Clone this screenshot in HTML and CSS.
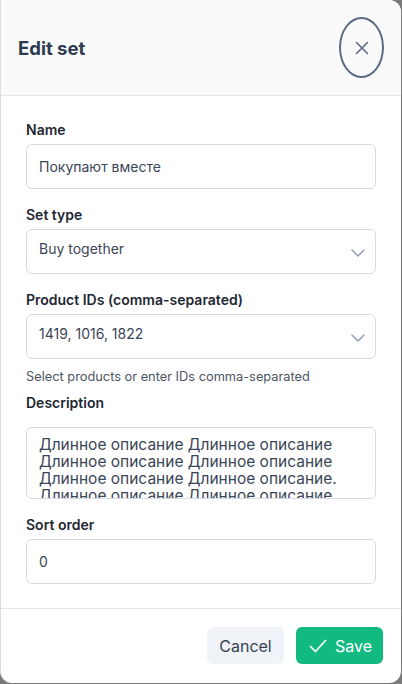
FILE: index.html
```html
<!DOCTYPE html>
<html lang="en">
<head>
<meta charset="utf-8">
<link rel="stylesheet" href="styles.css">
</head>
<body>
<div class="modal">
  <div class="modal-header">
    <h2 class="title">Edit set</h2>
    <button class="close-btn" type="button" aria-label="Close">
      <svg width="14" height="14" viewBox="0 0 14 14"><path d="M1.5 1.5 L12.5 12.5 M12.5 1.5 L1.5 12.5" stroke="#5b6b85" stroke-width="1.6" stroke-linecap="round" fill="none"/></svg>
    </button>
  </div>
  <div class="modal-body">
    <div class="field">
      <label class="label">Name</label>
      <div class="control">Покупают вместе</div>
    </div>
    <div class="field">
      <label class="label">Set type</label>
      <div class="control select"><span class="value">Buy together</span>
        <svg class="chev" width="14" height="8" viewBox="0 0 14 8"><path d="M1 1 L7 7 L13 1" stroke="#94a3b8" stroke-width="1.6" fill="none" stroke-linecap="round" stroke-linejoin="round"/></svg>
      </div>
    </div>
    <div class="field field-help">
      <label class="label">Product IDs (comma-separated)</label>
      <div class="control select"><span class="value">1419, 1016, 1822</span>
        <svg class="chev" width="14" height="8" viewBox="0 0 14 8"><path d="M1 1 L7 7 L13 1" stroke="#94a3b8" stroke-width="1.6" fill="none" stroke-linecap="round" stroke-linejoin="round"/></svg>
      </div>
      <p class="help">Select products or enter IDs comma-separated</p>
    </div>
    <div class="field">
      <label class="label label-desc">Description</label>
      <div class="textarea"><div class="textarea-text">Длинное описание Длинное описание Длинное описание Длинное описание Длинное описание Длинное описание. Длинное описание Длинное описание.</div></div>
    </div>
    <div class="field field-last">
      <label class="label">Sort order</label>
      <div class="control">0</div>
    </div>
  </div>
  <div class="modal-footer">
    <button class="btn btn-cancel" type="button">Cancel</button>
    <button class="btn btn-save" type="button">
      <svg width="18" height="14" viewBox="0 0 18 14"><path d="M1.5 7.5 L6.5 12.5 L16.5 1.5" stroke="#ffffff" stroke-width="1.7" fill="none" stroke-linecap="round" stroke-linejoin="round"/></svg>
      <span>Save</span>
    </button>
  </div>
</div>
</body>
</html>
```
FILE: styles.css
```css
* { box-sizing: border-box; }
html, body { margin: 0; padding: 0; }
body {
  background: #7a7a7a;
  font-family: Inter, "Noto Sans", sans-serif;
  width: 402px;
  height: 684px;
  overflow: hidden;
}
.modal {
  width: 401px;
  height: 683px;
  background: #ffffff;
  border-radius: 0 12px 12px 12px;
  border-left: 1px solid #dcdcdc;
  display: flex;
  flex-direction: column;
  overflow: hidden;
}
.modal-header {
  height: 96px;
  background: #fafafa;
  border-bottom: 1px solid #e5e7eb;
  display: flex;
  align-items: center;
  justify-content: space-between;
  padding: 0 17px 0 17px;
  flex-shrink: 0;
}
.title {
  margin: 0;
  font-size: 18.5px;
  font-weight: 700;
  color: #2d3a4f;
}
.close-btn {
  width: 45px;
  height: 61px;
  border: 2px solid #5b6b85;
  border-radius: 50%;
  background: transparent;
  display: flex;
  align-items: center;
  justify-content: center;
  padding: 0;
}
.modal-body {
  flex: 1;
  padding: 24px 25px 0 25px;
  border-bottom: 1px solid #e5e7eb;
}
.field { margin-bottom: 16px; }
.field-help { margin-bottom: 8px; }
.field-last { margin-bottom: 0; }
.label {
  display: block;
  font-size: 14px;
  line-height: 20px;
  font-weight: 600;
  color: #1f2733;
  margin-bottom: 4px;
}
.label-desc { margin-bottom: 14px; }
.control {
  height: 45px;
  border: 1px solid #d5dbe4;
  border-radius: 6px;
  padding: 0 12px;
  display: flex;
  align-items: center;
  font-size: 14px;
  color: #3a4556;
}
.select { justify-content: space-between; }
.select .value { margin-top: -6px; }
.chev { margin-right: -2px; margin-top: 2px; }
.help {
  margin: 10px 0 0 0;
  font-size: 12.8px;
  line-height: 16px;
  color: #4b5563;
}
.textarea {
  height: 72px;
  border: 1px solid #d5dbe4;
  border-radius: 6px;
  overflow: hidden;
  padding: 8px 12px 0 12px;
}
.textarea-text {
  font-size: 15.5px;
  line-height: 17px;
  color: #3a4556;
  width: 320px;
}
.modal-footer {
  height: 74px;
  display: flex;
  justify-content: flex-end;
  align-items: flex-start;
  gap: 12px;
  padding: 18px 18px 0 0;
  flex-shrink: 0;
}
.btn {
  height: 37px;
  border: none;
  border-radius: 6px;
  font-family: Inter, "Noto Sans", sans-serif;
  font-size: 16px;
  display: flex;
  align-items: center;
  justify-content: center;
}
.btn-cancel {
  width: 77px;
  background: #f0f3f8;
  color: #344256;
}
.btn-save {
  width: 87px;
  background: #12b981;
  color: #ffffff;
  gap: 8px;
  padding-right: 4px;
}
```
